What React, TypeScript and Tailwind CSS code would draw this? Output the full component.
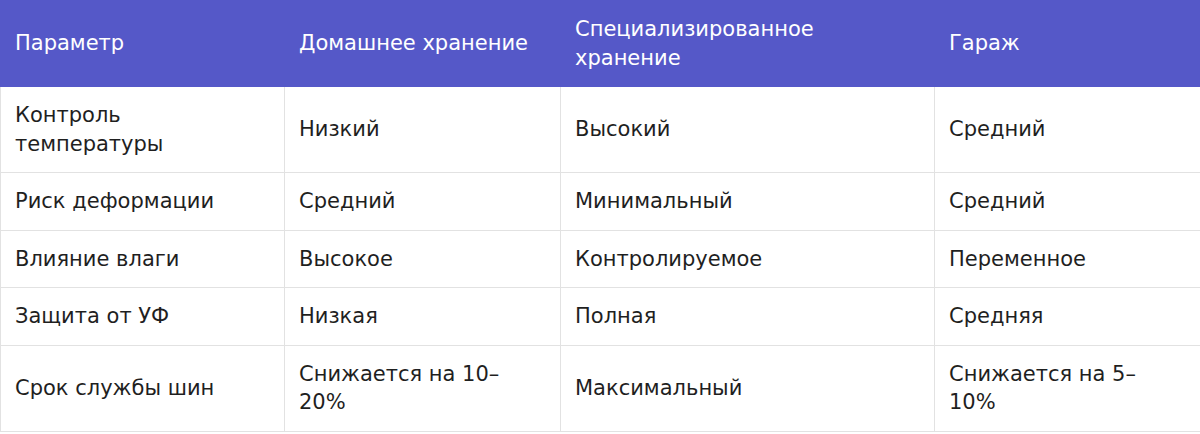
import React from "react";

const rows: React.ReactNode[][] = [
  ["Контроль температуры", "Низкий", "Высокий", "Средний"],
  ["Риск деформации", "Средний", "Минимальный", "Средний"],
  ["Влияние влаги", "Высокое", "Контролируемое", "Переменное"],
  ["Защита от УФ", "Низкая", "Полная", "Средняя"],
  [
    "Срок службы шин",
    <>
      Снижается на 10–
      <br />
      20%
    </>,
    "Максимальный",
    <>
      Снижается на 5–
      <br />
      10%
    </>,
  ],
];

const headers = ["Параметр", "Домашнее хранение", "Специализированное хранение", "Гараж"];

export default function App() {
  return (
    <div className="w-[1200px] bg-white">
      <table
        className="w-[1200px] table-fixed border-collapse text-[21px] leading-[28.5px] text-[#1f1f1f]"
        style={{ fontFamily: "'DejaVu Sans', Verdana, sans-serif" }}
      >
        <colgroup>
          <col className="w-[284px]" />
          <col className="w-[276px]" />
          <col className="w-[374px]" />
          <col className="w-[266px]" />
        </colgroup>
        <thead>
          <tr className="bg-[#5558c8] text-white">
            {headers.map((h) => (
              <th
                key={h}
                className="px-[14px] py-[14px] text-left align-middle font-normal border border-[#5558c8]"
              >
                {h}
              </th>
            ))}
          </tr>
        </thead>
        <tbody>
          {rows.map((r, i) => (
            <tr key={i}>
              {r.map((c, j) => (
                <td
                  key={j}
                  className="px-[14px] py-[14px] align-middle border border-[#e2e2e2]"
                >
                  {c}
                </td>
              ))}
            </tr>
          ))}
        </tbody>
      </table>
    </div>
  );
}
